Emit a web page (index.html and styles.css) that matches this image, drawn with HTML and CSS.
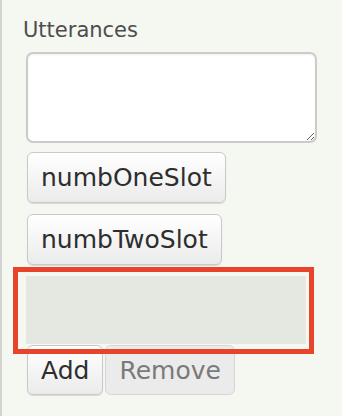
FILE: index.html
```html
<!DOCTYPE html>
<html>
<head>
<meta charset="utf-8">
<link rel="stylesheet" href="styles.css">
</head>
<body>
<div class="panel">
  <div class="label">Utterances</div>
  <textarea class="area"></textarea>
  <div class="slot-list">
    <button class="btn">numbOneSlot</button>
    <button class="btn">numbTwoSlot</button>
  </div>
  <div class="dropzone"></div>
  <div class="actions">
    <button class="btn">Add</button>
    <button class="btn disabled">Remove</button>
  </div>
  <div class="highlight"></div>
</div>
</body>
</html>
```
FILE: styles.css
```css
html, body {
  margin: 0;
  padding: 0;
  background: #f5f7f1;
  height: 100%;
}
.panel {
  position: relative;
  box-sizing: border-box;
  height: 416px;
  border-left: 2px solid #d3d4d0;
  padding: 17px 0 0 24px;
  font-family: "DejaVu Sans", sans-serif;
  display: flex;
  flex-direction: column;
  align-items: flex-start;
}
.label {
  font-size: 21px;
  line-height: 26px;
  color: #4d4d4d;
  margin-left: -3px;
}
.area {
  box-sizing: border-box;
  display: block;
  margin: 9px 0 0 0;
  width: 291px;
  height: 91px;
  border: 2px solid #cbcbcb;
  border-radius: 7px;
  background: #fff;
  box-shadow: inset 0 1px 2px rgba(0,0,0,0.06);
  outline: none;
  padding: 0;
}
.slot-list {
  display: flex;
  flex-direction: column;
  align-items: flex-start;
  gap: 11px;
  margin-top: 9px;
  margin-left: 1px;
}
.btn {
  box-sizing: border-box;
  font-family: "DejaVu Sans", sans-serif;
  font-size: 25px;
  line-height: 29px;
  height: 51px;
  padding: 10px 13px 10px 13px;
  color: #2e2e2e;
  background: linear-gradient(#ffffff, #ebebeb);
  border: 1px solid #c9c9c9;
  border-radius: 6px;
  box-shadow: 0 1px 1px rgba(0,0,0,0.12);
  margin: 0;
}
.btn.disabled {
  color: #7a7a7a;
  background: #ebebeb;
  border-color: #d6d6d6;
  box-shadow: none;
}
.dropzone {
  width: 280px;
  height: 68px;
  margin-top: 11px;
  background: #e5e8e1;
}
.actions {
  display: flex;
  gap: 2px;
  margin-top: 1px;
  margin-left: 1px;
}
.actions .btn {
  height: 50px;
}
.highlight {
  position: absolute;
  box-sizing: border-box;
  left: 11px;
  top: 267px;
  width: 301px;
  height: 87px;
  border: 5px solid #e8432b;
}
```
